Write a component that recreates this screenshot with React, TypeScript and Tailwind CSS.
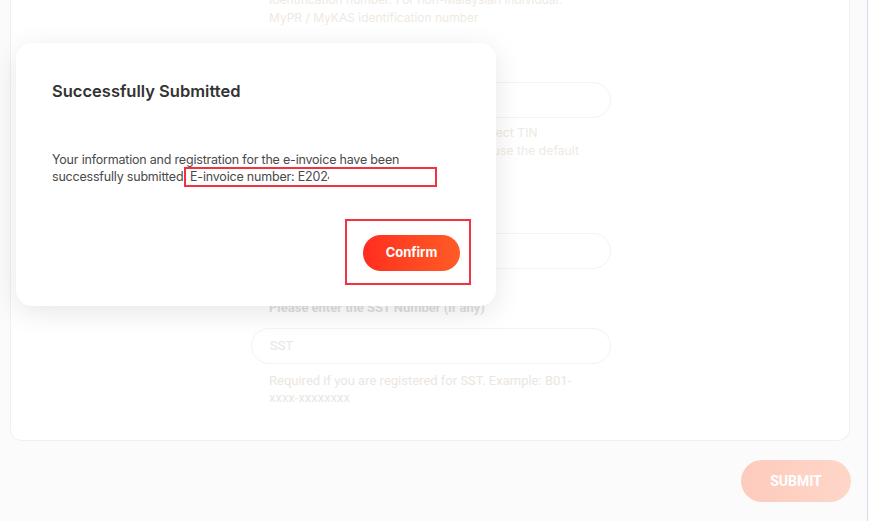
export default function App() {
  const sans = { fontFamily: "Inter, 'Noto Sans', sans-serif" };
  const roboto = { fontFamily: "Roboto, 'Liberation Sans', sans-serif" };

  return (
    <div className="relative flex h-[521px] w-[870px] overflow-hidden bg-[#fbfbfb]" style={sans}>
      {/* page behind the dialog */}
      <div className="flex flex-1 flex-col">
        <div className="ml-[10px] mr-[17px] -mt-[60px] flex h-[501px] flex-col rounded-b-xl border border-t-0 border-[#f0f0f0] bg-white pl-[240px]">
          <div className="w-[360px] pt-[51px]">
            <p className="whitespace-nowrap px-[18px] text-[12px] leading-[18px] text-[#efe9e3]">
              Identification number. For non-Malaysian individual:
              <br />
              MyPR / MyKAS identification number
            </p>
            <div className="mt-[55px] h-[36px] rounded-full border border-[#f3f3f3]" />
            <p className="mt-[6px] whitespace-nowrap px-[18px] text-[12px] leading-[18px] tracking-[0.1px] text-[#efe9e3]">
              Please double check and enter the correct TIN
              <br />
              number, if you do not have one please use the default
            </p>
            <p className="mt-[40px] px-[18px] text-[13px] font-semibold leading-[18px] text-[#e2e2e2]" style={roboto}>
              TIN Number
            </p>
            <div className="mt-[15px] h-[36px] rounded-full border border-[#f3f3f3]" />
            <p className="mt-[30px] px-[18px] text-[13px] font-semibold leading-[18px] text-[#dedede]" style={roboto}>
              Please enter the SST Number (if any)
            </p>
            <div className="mt-[11px] flex h-[36px] items-center rounded-full border border-[#f3f3f3] px-[18px]">
              <span className="text-[13px] text-[#e6e6e6]" style={roboto}>SST</span>
            </div>
            <p className="mt-[8px] whitespace-nowrap px-[18px] text-[13px] leading-[17px] text-[#ebe6e1]" style={roboto}>
              Required if you are registered for SST. Example: B01-
              <br />
              xxxx-xxxxxxxx
            </p>
          </div>
        </div>
        <div className="flex justify-end pr-[16px] pt-[19px]">
          <button
            className="h-[42px] w-[110px] rounded-full bg-gradient-to-r from-[#fdcbbd] to-[#fed6c8] text-[14px] font-bold text-white"
            style={roboto}
          >
            SUBMIT
          </button>
        </div>
      </div>
      <div className="w-[3px] border-l border-[#d3dee8] bg-white" />

      {/* dialog */}
      <div className="absolute left-[16px] top-[43px] flex h-[263px] w-[480px] flex-col rounded-2xl bg-white px-[36px] pt-[38px] shadow-[0_6px_28px_rgba(0,0,0,0.10)]">
        <h2 className="text-[16.5px] font-semibold leading-[20px] text-[#333]">Successfully Submitted</h2>
        <p className="mt-[50px] text-[12.5px] leading-[17px] tracking-[-0.2px] text-[#4a4a4a]">
          Your information and registration for the e-invoice have been
          <br />
          successfully submitted. E-invoice number:{" "}
          <span className="inline-block w-[31px] overflow-hidden whitespace-nowrap align-bottom">E2024</span>
        </p>
        <div className="mt-auto mb-[35px] flex justify-end">
          <button className="h-[36px] w-[97px] rounded-full bg-gradient-to-r from-[#ff2c1f] to-[#ff5a26] text-[13px] font-bold text-white">
            Confirm
          </button>
        </div>
      </div>

      {/* annotation boxes */}
      <div className="absolute left-[184px] top-[167px] h-[20px] w-[253px] border-2 border-[#f2323f]" />
      <div className="absolute left-[345px] top-[219px] h-[66px] w-[126px] border-2 border-[#f2323f]" />
    </div>
  );
}
